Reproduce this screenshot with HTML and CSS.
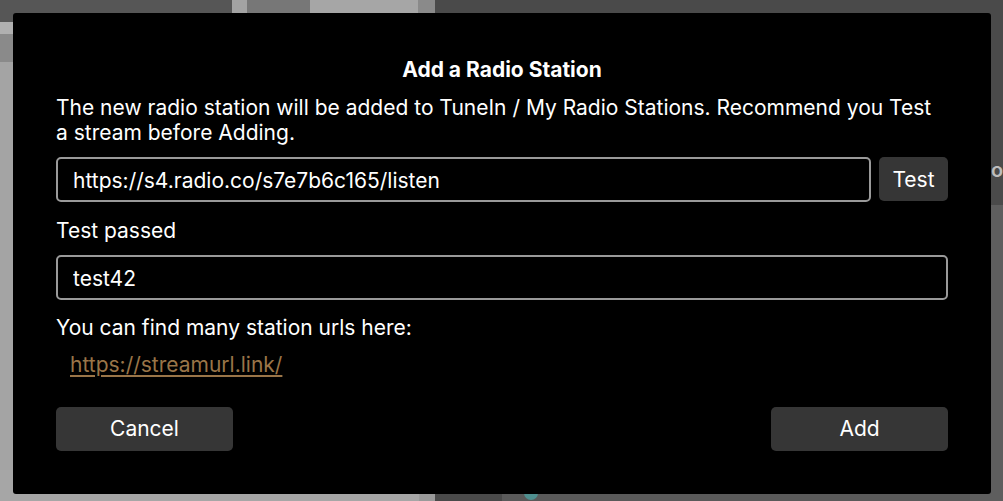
FILE: index.html
```html
<!DOCTYPE html>
<html lang="en">
<head>
<meta charset="utf-8">
<title>Add a Radio Station</title>
<link rel="stylesheet" href="styles.css">
</head>
<body>
<div class="backdrop" aria-hidden="true">
  <div class="bg bg-tl"></div>
  <div class="bg bg-t1"></div>
  <div class="bg bg-t2"></div>
  <div class="bg bg-t3"></div>
  <div class="bg bg-t4"></div>
  <div class="bg bg-l1"></div>
  <div class="bg bg-l2"></div>
  <div class="bg bg-l3"></div>
  <div class="bg bg-b1"></div>
  <div class="bg bg-b2"></div>
  <div class="bg bg-b3"></div>
  <div class="bg bg-r2"></div>
  <span class="bg-glyph">o</span>
  <span class="bg-dot"></span>
</div>
<div class="modal" role="dialog" aria-labelledby="title">
  <h2 id="title" class="modal-title">Add a Radio Station</h2>
  <p class="modal-text">The new radio station will be added to TuneIn / My Radio Stations. Recommend you Test a stream before Adding.</p>
  <div class="url-row">
    <input class="field field-url" type="text" value="https://s4.radio.co/s7e7b6c165/listen">
    <button class="btn btn-test">Test</button>
  </div>
  <p class="status">Test passed</p>
  <input class="field" type="text" value="test42">
  <p class="hint">You can find many station urls here:</p>
  <a class="link" href="#">https://streamurl.link/</a>
  <div class="actions">
    <button class="btn btn-action">Cancel</button>
    <button class="btn btn-action">Add</button>
  </div>
</div>
</body>
</html>
```

FILE: styles.css
```css
html, body {
  margin: 0;
  padding: 0;
}
body {
  width: 1003px;
  height: 501px;
  overflow: hidden;
  position: relative;
  background: #4a4a4a;
  font-family: "Inter", "Liberation Sans", sans-serif;
  color: #fff;
}
.backdrop {
  position: absolute;
  inset: 0;
}
.bg {
  position: absolute;
}
.bg-tl { left: 0; top: 0; width: 232px; height: 30px; background: #565656; }
.bg-t1 { left: 232px; top: 0; width: 15px; height: 30px; background: #a3a3a3; }
.bg-t2 { left: 247px; top: 0; width: 63px; height: 30px; background: #777; }
.bg-t3 { left: 310px; top: 0; width: 108px; height: 30px; background: #a6a6a6; }
.bg-t4 { left: 418px; top: 0; width: 17px; height: 30px; background: #8a8a8a; }
.bg-l1 { left: 0; top: 22px; width: 30px; height: 12px; background: #b0b0b0; }
.bg-l2 { left: 0; top: 34px; width: 30px; height: 28px; background: #8a8a8a; }
.bg-l3 { left: 0; top: 62px; width: 30px; height: 439px; background: #a4a4a4; }
.bg-b1 { left: 0; top: 470px; width: 419px; height: 31px; background: #a6a6a6; }
.bg-b2 { left: 419px; top: 470px; width: 16px; height: 31px; background: #9a9a9a; }
.bg-b3 { left: 502px; top: 470px; width: 501px; height: 31px; background: #5a5a5a; }
.bg-r2 { left: 970px; top: 205px; width: 33px; height: 296px; background: #5e5e5e; }
.bg-glyph {
  position: absolute;
  left: 991px;
  top: 158px;
  font-size: 20px;
  font-weight: 600;
  color: #bdbdbd;
}
.bg-dot {
  position: absolute;
  left: 524px;
  top: 486px;
  width: 14px;
  height: 14px;
  border-radius: 50%;
  background: #4f8f8f;
}

.modal {
  position: absolute;
  left: 13px;
  top: 13px;
  width: 978px;
  height: 481px;
  box-sizing: border-box;
  padding: 45px 43px 43px;
  background: #000;
  border-radius: 3px;
  display: flex;
  flex-direction: column;
  font-size: 21px;
  line-height: 25px;
}
.modal-title {
  margin: 0 0 13px;
  font-size: 21px;
  line-height: 24px;
  font-weight: 700;
  text-align: center;
}
.modal-text {
  margin: 0 0 12px;
}
.url-row {
  display: flex;
  gap: 8px;
  align-items: flex-start;
}
.field {
  box-sizing: border-box;
  height: 45px;
  width: 100%;
  margin: 0;
  padding: 1px 15px 0;
  background: #000;
  color: #fff;
  border: 2px solid #9a9a9a;
  border-radius: 5px;
  font-family: inherit;
  font-size: 21px;
  outline: none;
}
.field-url {
  flex: 1;
  width: auto;
}
.btn {
  box-sizing: border-box;
  margin: 0;
  border: 0;
  border-radius: 5px;
  background: #363636;
  color: #fff;
  font-family: inherit;
  font-size: 21px;
  line-height: 24px;
}
.btn-test {
  width: 69px;
  height: 44px;
  padding: 2px 0 0;
}
.status {
  margin: 16px 0 12px;
}
.hint {
  margin: 15px 0 12px;
}
.link {
  align-self: flex-start;
  margin-left: 14px;
  color: #9a7548;
  text-decoration: underline;
  text-underline-offset: 3px;
}
.actions {
  margin-top: auto;
  display: flex;
  justify-content: space-between;
}
.btn-action {
  width: 177px;
  height: 44px;
}
```
